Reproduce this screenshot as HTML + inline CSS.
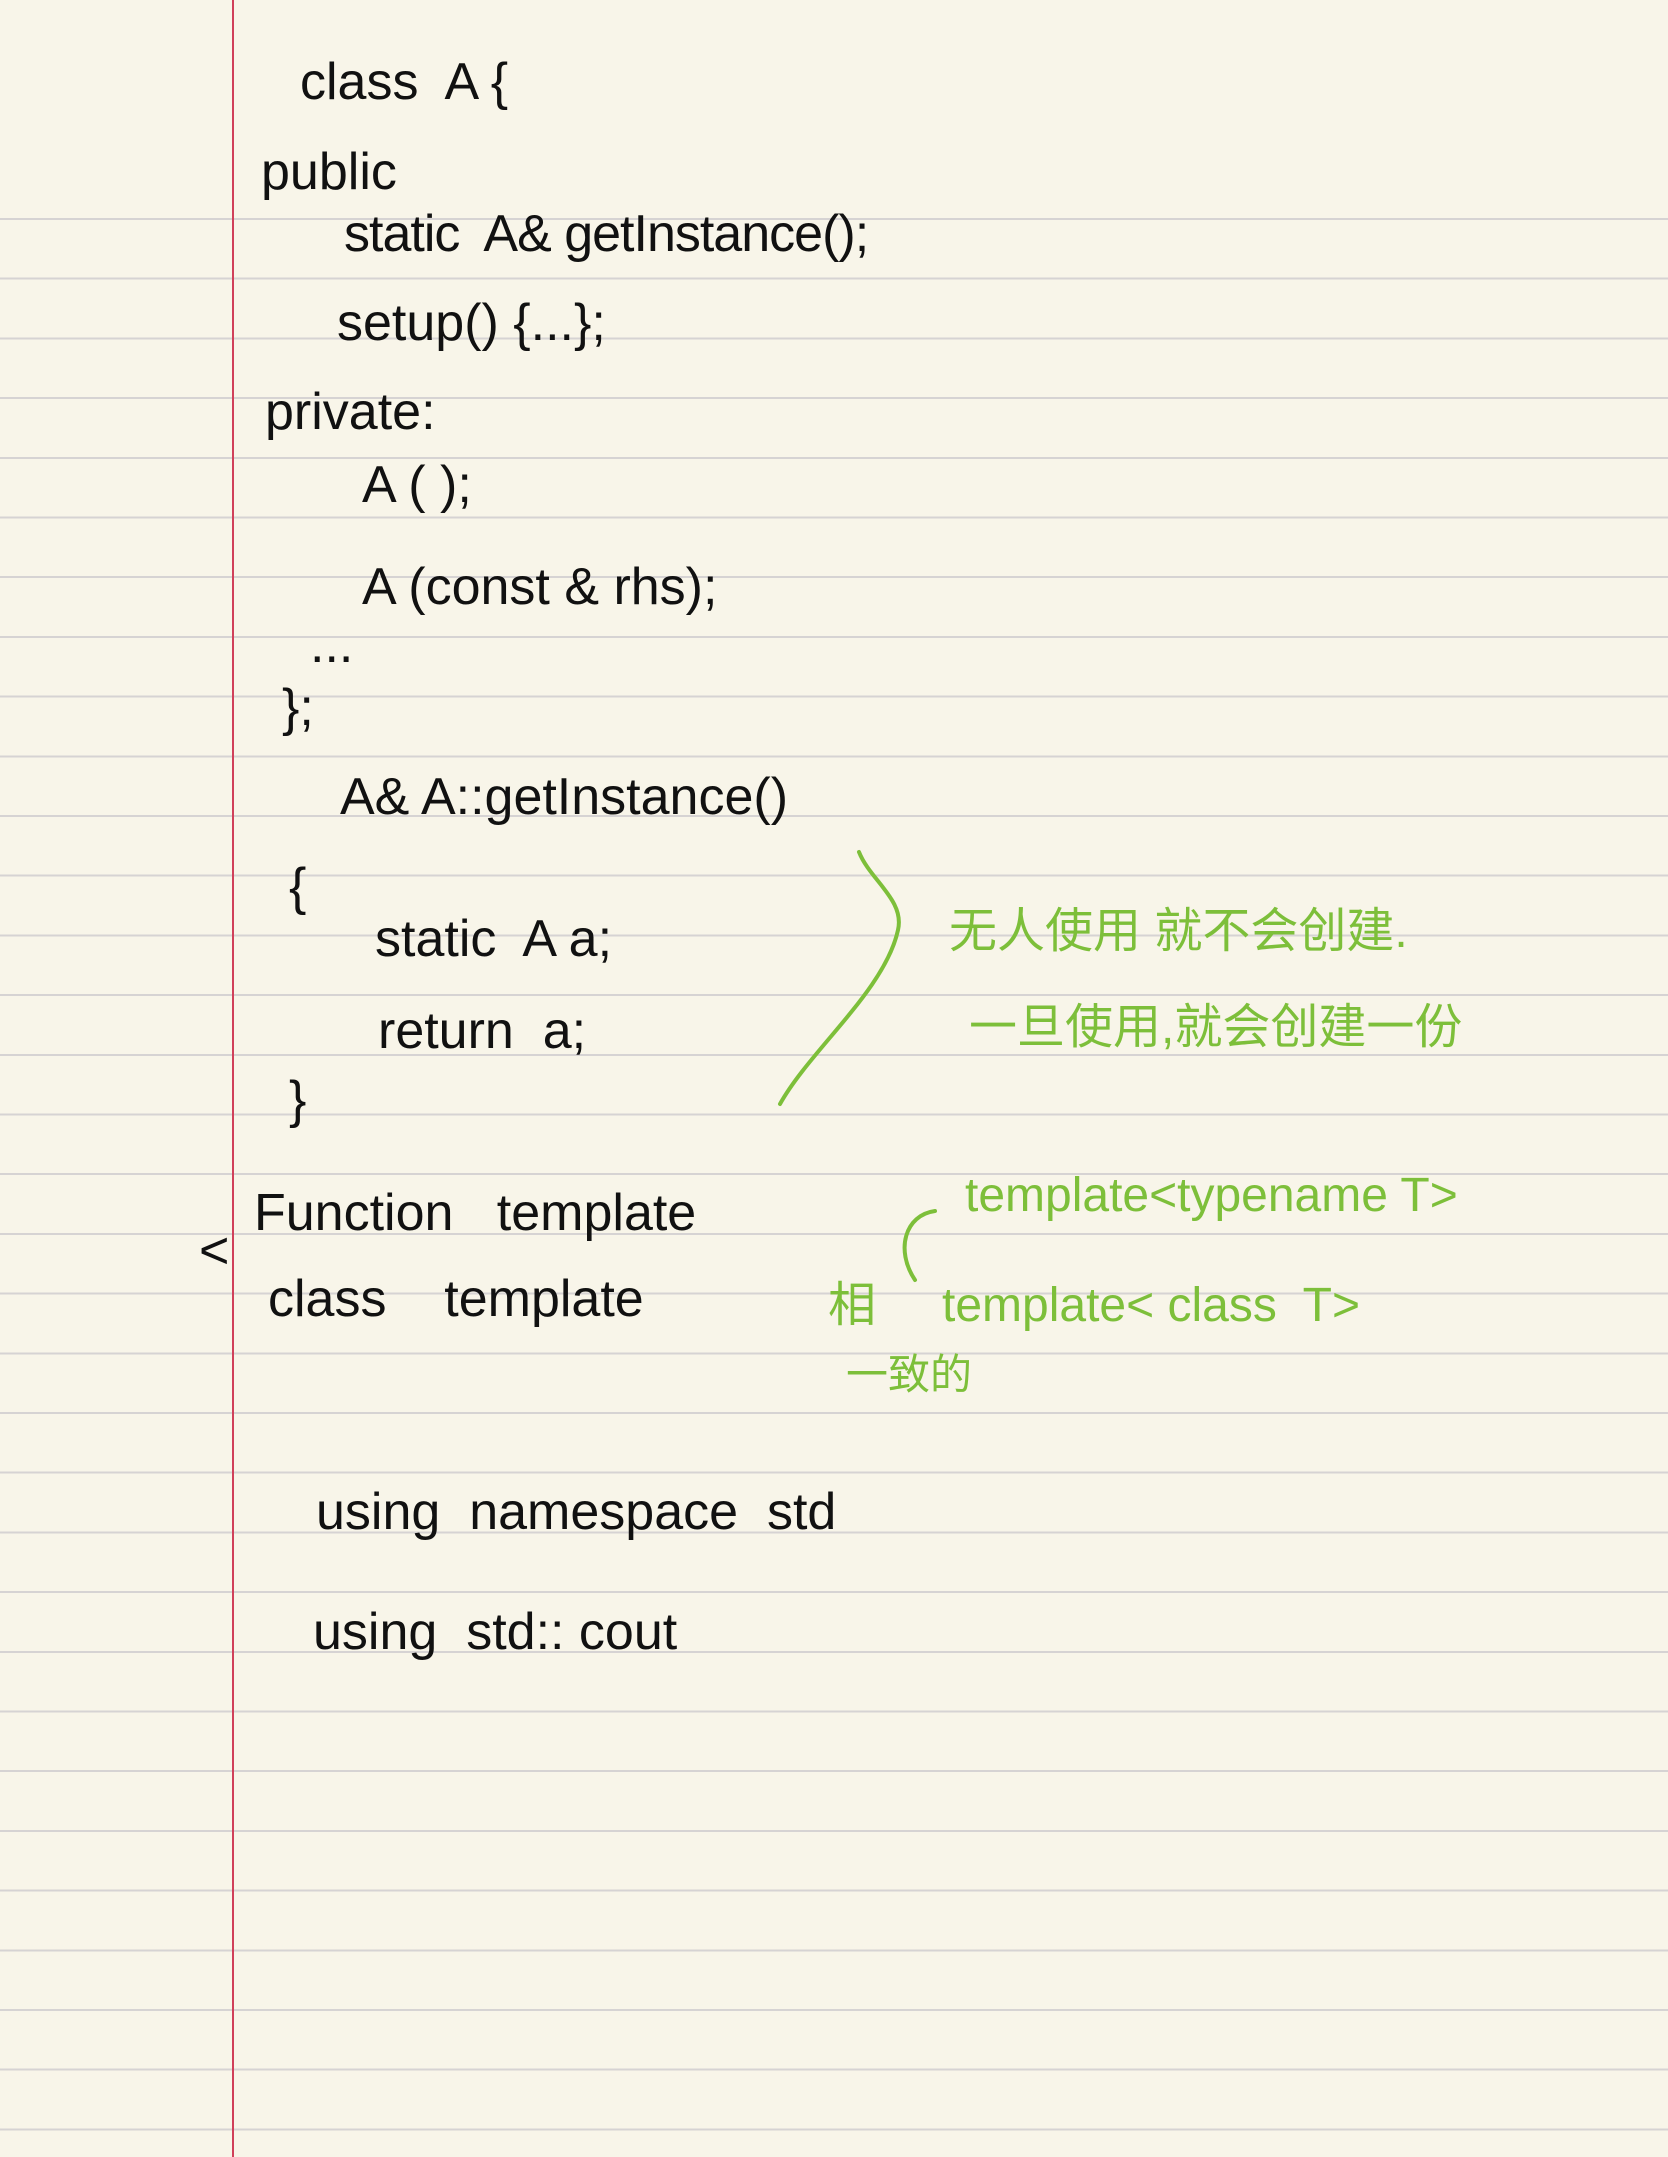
<!DOCTYPE html>
<html><head><meta charset="utf-8"><style>
html,body{margin:0;padding:0}
body{width:1668px;height:2157px;position:relative;overflow:hidden;background-color:#f8f5e9}
.lines{position:absolute;left:0;top:218px;width:1668px;height:1939px;
background-image:repeating-linear-gradient(to bottom,#d6d3d3 0px,#d6d3d3 2px,transparent 2px,transparent 59.7px);}
.red{position:absolute;left:232px;top:0;width:2px;height:2157px;background:#d0405a}
.t{position:absolute;font-family:"Liberation Sans","Noto Sans CJK SC",sans-serif;color:#111;font-size:52px;line-height:60px;white-space:pre;transform:translateY(-30px)}
.g{color:#7dbf3a;font-size:48px}
</style></head><body>
<div class="lines"></div>
<div class="red"></div>
<div class="t" style="left:300px;top:82px">class  A {</div>
<div class="t" style="left:261px;top:172px">public</div>
<div class="t" style="left:344px;top:234px;letter-spacing:-1px">static  A&amp; getInstance();</div>
<div class="t" style="left:337px;top:323px">setup() {...};</div>
<div class="t" style="left:265px;top:412px">private:</div>
<div class="t" style="left:362px;top:485px">A ( );</div>
<div class="t" style="left:362px;top:587px">A (const &amp; rhs);</div>
<div class="t" style="left:310px;top:645px">...</div>
<div class="t" style="left:282px;top:708px">};</div>
<div class="t" style="left:340px;top:797px">A&amp; A::getInstance()</div>
<div class="t" style="left:289px;top:887px">{</div>
<div class="t" style="left:375px;top:939px">static  A a;</div>
<div class="t" style="left:378px;top:1031px">return  a;</div>
<div class="t" style="left:289px;top:1100px">}</div>
<div class="t" style="left:199px;top:1251px">&lt;</div>
<div class="t" style="left:254px;top:1213px">Function   template</div>
<div class="t" style="left:268px;top:1299px">class    template</div>
<div class="t" style="left:316px;top:1512px">using  namespace  std</div>
<div class="t" style="left:313px;top:1632px">using  std:: cout</div>
<svg style="position:absolute;left:0;top:0" width="1668" height="2157"><path d="M859 852 C870 880 905 900 898 930 C885 990 810 1050 780 1104" fill="none" stroke="#7dbf3a" stroke-width="4" stroke-linecap="round"/><path d="M935 1211 C905 1215 895 1250 915 1280" fill="none" stroke="#7dbf3a" stroke-width="4" stroke-linecap="round"/></svg>
<div class="t g" style="left:949px;top:932px">无人使用 就不会创建.</div>
<div class="t g" style="left:969px;top:1028px">一旦使用,就会创建一份</div>
<div class="t g" style="left:965px;top:1196px">template&lt;typename T&gt;</div>
<div class="t g" style="left:942px;top:1306px">template&lt; class  T&gt;</div>
<div class="t g" style="left:828px;top:1306px">相</div>
<div class="t g" style="left:846px;top:1375px;font-size:42px">一致的</div>
</body></html>
